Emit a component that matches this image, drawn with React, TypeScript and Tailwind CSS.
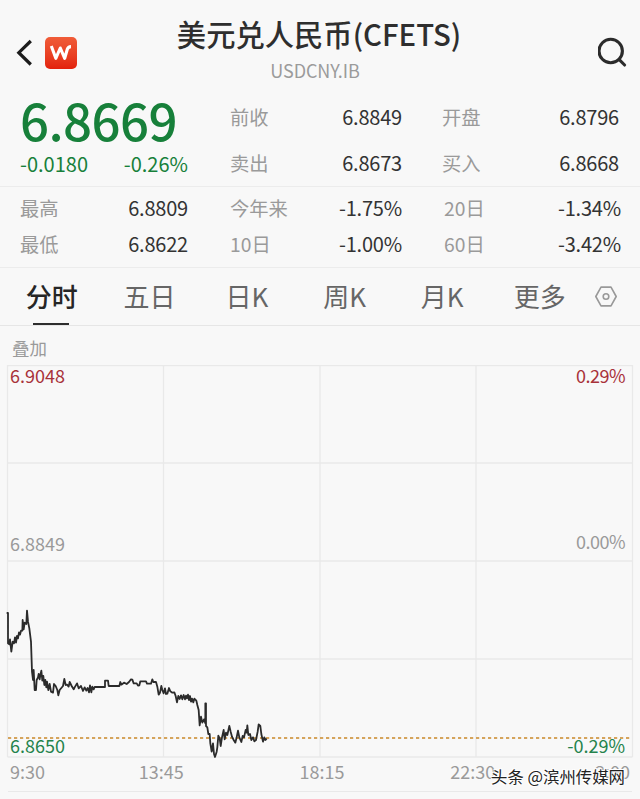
interface Quote {
  label: string;
  value: string;
}

const topQuotes: Quote[][] = [
  [
    { label: '前收', value: '6.8849' },
    { label: '开盘', value: '6.8796' },
  ],
  [
    { label: '卖出', value: '6.8673' },
    { label: '买入', value: '6.8668' },
  ],
];

const rangeQuotes: Quote[][] = [
  [
    { label: '最高', value: '6.8809' },
    { label: '今年来', value: '-1.75%' },
    { label: '20日', value: '-1.34%' },
  ],
  [
    { label: '最低', value: '6.8622' },
    { label: '10日', value: '-1.00%' },
    { label: '60日', value: '-3.42%' },
  ],
];

const tabs = ['分时', '五日', '日K', '周K', '月K', '更多'];

// Intraday price, three units per pixel
const pricePoints =
  '20,39 24,39 24,130 28,133 30,118 34,155 38,125 42,130 45,112 48,128 51,108 54,115 57,97 60,104 63,92 67,92 68,60 71,88 74,68 79,72 81,32 84,65 88,85 93,125 96,215 99,240 101,210 104,270 108,270 110,240 114,232 116,222 119,238 121,225 124,212 127,242 130,228 133,255 136,240 139,262 141,245 145,270 149,252 153,275 159,278 162,252 167,258 172,270 175,286 179,270 184,264 189,258 193,237 197,255 201,254 206,260 209,246 215,258 221,268 224,262 231,250 236,265 243,258 249,273 254,262 259,272 263,264 267,277 270,256 274,277 277,260 281,268 284,261 315,261 315,242 324,242 326,258 358,258 361,246 364,254 372,248 380,252 387,246 393,238 397,239 401,250 410,250 414,257 ' +
  '418,256 421,244 438,244 441,251 453,251 457,238 460,246 468,246 472,260 476,284 480,278 484,258 487,270 491,280 495,265 498,282 502,281 507,264 511,274 517,278 523,277 527,288 531,307 535,288 539,297 543,286 547,298 551,285 555,298 558,287 561,295 564,284 567,300 570,288 573,305 576,296 580,307 583,296 589,302 592,315 596,330 599,376 603,350 607,368 612,358 616,370 616,310 618,310 618,378 622,382 625,402 629,402 631,430 635,455 639,430 642,462 645,471 650,455 652,442 655,407 659,415 662,438 666,412 671,390 674,418 678,398 682,405 688,378 692,395 696,410 701,420 706,428 710,412 714,392 718,412 724,426 728,408 732,412 737,390 740,398 742,376 745,405 750,402 754,420 759,412 763,424 768,420 773,395 776,373 781,378 784,402 789,425 793,412 796,420 800,416';

const Header = () => (
  <header className="flex h-[95px] items-start">
    <div className="flex w-[119px] items-center pl-[16px] pt-[36px]">
      <svg className="h-[33px] w-[17px]" viewBox="0 0 17 33" fill="none" stroke="#1c1c1c" strokeWidth="3.2">
        <path d="M14.8 5 2.8 16.7 14.8 28.5" />
      </svg>
      <div className="ml-[12px] flex h-[32px] w-[32px] items-center justify-center rounded-[5px] bg-linear-to-b from-[#f05c38] to-[#e3200c]">
        <svg className="h-[18px] w-[24px]" viewBox="0 0 24 18" fill="none" stroke="#fff" strokeWidth="3.1" strokeLinejoin="round">
          <path d="M2.3 2 6.8 14.3 11.3 4 15.7 14.3 18.3 5.3Q19.1 2.6 22 2.6" />
        </svg>
      </div>
    </div>
    <div className="flex flex-1 flex-col items-center pt-[15px]">
      <h1 className="text-[29.3px] font-medium leading-[36px] whitespace-nowrap text-[#2e2e2e]">美元兑人民币(CFETS)</h1>
      <p className="mt-[8px] -ml-[8px] text-[18px] leading-[22px] tracking-[-0.1px] text-[#9b9b9b]">USDCNY.IB</p>
    </div>
    <div className="flex w-[121px] justify-end pr-[10px] pt-[36px]">
      <svg className="size-[32px]" viewBox="0 0 32 32" fill="none" stroke="#2b2b2b" strokeWidth="3.1" strokeLinecap="round">
        <circle cx="12.7" cy="15" r="11.7" />
        <path d="M21 23.4 26.6 29" />
      </svg>
    </div>
  </header>
);

const QuoteCell = ({ label, value }: Quote) => (
  <div className="flex items-center justify-between">
    <span className="text-[#9a9a9a]">{label}</span>
    <span className="text-[20px] tracking-[-0.2px] text-[#333]">{value}</span>
  </div>
);

const Summary = () => (
  <section className="flex h-[92px] border-b border-[#ececec] text-[19.3px] leading-[24px]">
    <div className="w-[230px] pl-[20px] text-[#17803a]">
      <div className="h-[55px] text-[51px] font-medium leading-[49px] tracking-[-0.6px]">6.8669</div>
      <div className="flex w-[168px] justify-between pt-[2px] text-[20px]">
        <span>-0.0180</span>
        <span>-0.26%</span>
      </div>
    </div>
    <div className="flex flex-col gap-[22px] pt-[10px]">
      {topQuotes.map((row) => (
        <div key={row[0].label} className="grid grid-cols-[172px_177px] gap-x-[40px]">
          {row.map((quote) => (
            <QuoteCell key={quote.label} {...quote} />
          ))}
        </div>
      ))}
    </div>
  </section>
);

const Ranges = () => (
  <section className="flex h-[81px] flex-col gap-[12px] border-b border-[#ececec] pt-[9px] pl-[20px] text-[19.3px] leading-[24px]">
    {rangeQuotes.map((row) => (
      <div key={row[0].label} className="grid grid-cols-[168px_172px_177px] gap-x-[42px]">
        {row.map((quote) => (
          <QuoteCell key={quote.label} {...quote} />
        ))}
      </div>
    ))}
  </section>
);

const Tabs = () => (
  <nav className="flex h-[58px] items-stretch border-b border-[#e6e6e6] pl-[3px] text-[26px] text-[#666]">
    {tabs.map((tab, index) => (
      <div key={tab} className="flex w-[97.6px] flex-col items-center">
        <span className={`flex-1 pt-[8px] leading-[40px] ${index === 0 ? 'font-medium text-[#262626]' : ''}`}>{tab}</span>
        {index === 0 && <span className="mr-[2px] h-[2px] w-[36px] bg-[#2e2e2e]" />}
      </div>
    ))}
    <svg className="mt-[17px] ml-[5px] h-[23px] w-[24px]" viewBox="0 0 24 23" fill="none" stroke="#999" strokeWidth="1.6">
      <path d="M7 2.1h10l5.2 9.4L17 20.9H7L1.8 11.5Z" strokeLinejoin="round" />
      <circle cx="12" cy="11.5" r="2.8" />
    </svg>
  </nav>
);

const Chart = () => (
  <section className="relative h-[393px] text-[18px] leading-[22px]">
    <svg className="block h-[393px] w-[640px]" viewBox="0 0 640 393" fill="none">
      <path
        stroke="#e9e9e9"
        strokeWidth="1.3"
        d="M7.5 .5H632.5M7.5 98H632.5M7.5 196H632.5M7.5 294H632.5M7.5 392H632.5M7.5 0V392M163.5 0V392M320 0V392M476 0V392M632.5 0V392"
      />
      <path stroke="#d5a45c" strokeWidth="1.9" strokeDasharray="3.2 2.8" d="M8 373H632" />
      <g transform="translate(0 235) scale(.33333)">
        <polyline points={pricePoints} stroke="#2b2b2b" strokeWidth="5.4" strokeLinejoin="round" />
      </g>
    </svg>
    <span className="absolute top-[-1px] left-[10px] text-[#a8323a]">6.9048</span>
    <span className="absolute top-[-1px] right-[15px] tracking-[-0.5px] text-[#a8323a]">0.29%</span>
    <span className="absolute top-[167px] left-[10px] text-[#9a9a9a]">6.8849</span>
    <span className="absolute top-[165px] right-[15px] tracking-[-0.5px] text-[#9a9a9a]">0.00%</span>
    <span className="absolute top-[369px] left-[10px] text-[#24834c]">6.8650</span>
    <span className="absolute top-[369px] right-[15px] text-[#24834c]">-0.29%</span>
  </section>
);

const TimeAxis = () => (
  <footer className="relative ml-[8px] flex h-[34px] w-[624px] items-center justify-between border-b border-[#e9e9e9] pr-[2px] pb-[8px] pl-[2px] text-[18px] leading-[22px] text-[#9a9a9a]">
    <span>9:30</span>
    <span className="ml-[10px]">13:45</span>
    <span className="ml-[32px]">18:15</span>
    <span className="ml-[22px]">22:30</span>
    <span className="ml-[16px]">3:00</span>
    <span className="absolute top-[7px] right-[7px] text-[16.4px] leading-[22px] whitespace-nowrap text-[#222] [text-shadow:-1px_-1px_0_#fff,1px_-1px_0_#fff,-1px_1px_0_#fff]">
      头条 @滨州传媒网
    </span>
  </footer>
);

const App = () => (
  <main className="h-[799px] w-[640px] overflow-hidden bg-[#f8f8f8] font-['Noto_Sans_CJK_SC',sans-serif]">
    <Header />
    <Summary />
    <Ranges />
    <Tabs />
    <div className="h-[39px] pt-[10px] pl-[12px] text-[17.5px] leading-[24px] text-[#9a9a9a]">叠加</div>
    <Chart />
    <TimeAxis />
  </main>
);

export default App;
